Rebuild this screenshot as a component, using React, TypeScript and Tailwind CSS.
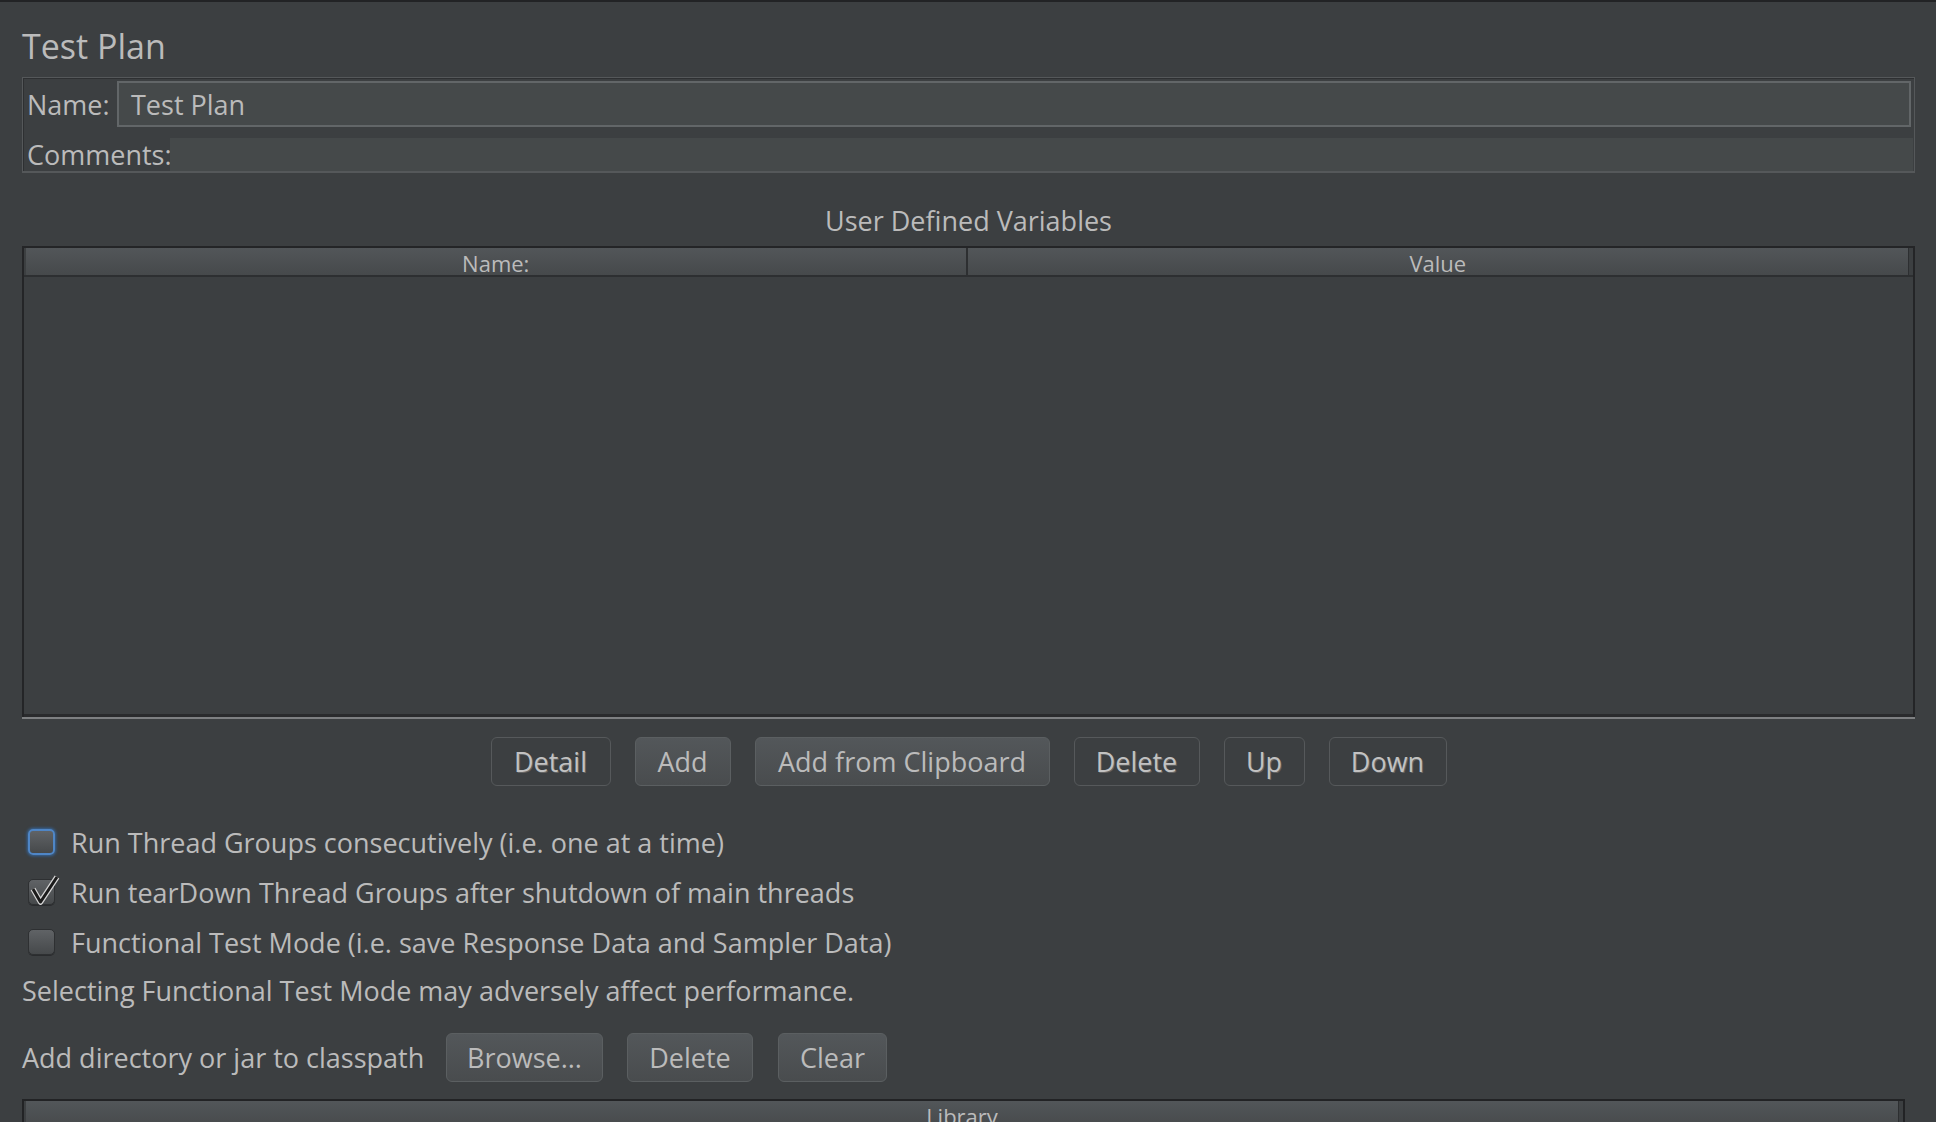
import React from "react";

/**
 * JMeter "Test Plan" editor, Darcula look.
 */

interface BtnProps {
  label: string;
  enabled?: boolean;
  className?: string;
}

function Btn({ label, enabled = false, className = "" }: BtnProps) {
  return (
    <div
      className={`flex h-[49px] shrink-0 items-center justify-center rounded-[6px] border-[1.5px] text-[27px] leading-[27px] ${
        enabled
          ? "border-[#5b5f61] bg-linear-to-b from-[#53575a] to-[#494c4e] text-[#bbbbbb]"
          : "border-[#56595b] bg-[#3c3f41] text-[#c2c2c2] [text-shadow:1px_1px_0_#646464]"
      } ${className}`}
    >
      {label}
    </div>
  );
}

interface CheckRowProps {
  label: string;
  checked?: boolean;
  focused?: boolean;
}

function CheckRow({ label, checked = false, focused = false }: CheckRowProps) {
  return (
    <div className="flex h-[50px] items-center">
      <div
        className={`relative ml-[6px] h-[26px] w-[27px] rounded-[5px] bg-linear-to-b from-[#606366] to-[#46494b] ${
          focused
            ? "border-[2px] border-[#4f86c6] shadow-[0_0_3px_1px_#35679f]"
            : "border border-[#2e3032] shadow-[0_1px_0_#2a2c2e]"
        }`}
      >
        {checked && (
          <svg
            className="absolute left-[-1px] top-[-5px] overflow-visible"
            width="32"
            height="30"
            viewBox="0 0 32 30"
          >
            <path d="M5 14 L12.5 27 L29 2" fill="none" stroke="#d6d6d6" strokeWidth="5.5" strokeLinejoin="round" />
            <path d="M5 14 L12.5 27 L29 2" fill="none" stroke="#1b1b1b" strokeWidth="3" strokeLinejoin="round" />
          </svg>
        )}
      </div>
      <span className="ml-[16px]">{label}</span>
    </div>
  );
}

function TableHeader({ columns }: { columns: string[] }) {
  return (
    <div
      className={`grid h-[27px] bg-linear-to-b from-[#525659] to-[#46494b] text-[22px] leading-[22px] text-[#bbbbbb] ${
        columns.length === 2 ? "grid-cols-2" : "grid-cols-1"
      }`}
    >
      {columns.map((c, i) => (
        <div
          key={c}
          className={`flex items-center justify-center pt-[2px] ${
            i < columns.length - 1 ? "border-r-2 border-[#2d2f31]" : "border-r border-[#2d2f31]"
          }`}
        >
          {c}
        </div>
      ))}
    </div>
  );
}

export default function App() {
  return (
    <div className="h-[1122px] w-[1936px] overflow-hidden border-t-2 border-[#222325] bg-[#3c3f41] pl-[22px] pr-[21px] font-['Open_Sans',sans-serif] text-[27px] leading-[27px] text-[#bbbbbb]">
      {/* title */}
      <div className="mt-[27px] h-[34px] text-[34px] leading-[34px]">Test Plan</div>

      {/* name / comments */}
      <div className="mt-[14px] border border-b-2 border-[#55585a] pl-[4px] shadow-[inset_1px_1px_0_#2e3032]">
        <div className="flex items-center pt-[3px]">
          <span className="w-[90px] shrink-0">Name:</span>
          <div className="mr-[3px] flex h-[46px] flex-1 items-center border-2 border-[#626668] bg-[#45494a] pl-[12px]">
            Test Plan
          </div>
        </div>
        <div className="mt-[11px] flex items-center">
          <span className="w-[143px] shrink-0">Comments:</span>
          <div className="mr-[1px] h-[33px] flex-1 bg-[#45494a]" />
        </div>
      </div>

      {/* user defined variables */}
      <div className="h-[73px] pt-[34px] text-center">User Defined Variables</div>
      <div className="border-x-2 border-t-2 border-[#242527]">
        <div className="pl-[2px] pr-[4px]">
          <TableHeader columns={["Name:", "Value"]} />
        </div>
        <div className="h-[439px] border-t-2 border-[#2d2f31]" />
        <div className="h-[3px] bg-[#2a2b2d]" />
      </div>
      <div className="h-[2px] bg-[#7e8082]" />

      <div className="mt-[18px] flex justify-center gap-[24px]">
        <Btn label="Detail" className="w-[120px]" />
        <Btn label="Add" enabled className="w-[96px]" />
        <Btn label="Add from Clipboard" enabled className="w-[295px]" />
        <Btn label="Delete" className="w-[126px]" />
        <Btn label="Up" className="w-[81px]" />
        <Btn label="Down" className="w-[118px]" />
      </div>

      {/* options */}
      <div className="mt-[31px]">
        <CheckRow label="Run Thread Groups consecutively (i.e. one at a time)" focused />
        <CheckRow label="Run tearDown Thread Groups after shutdown of main threads" checked />
        <CheckRow label="Functional Test Mode (i.e. save Response Data and Sampler Data)" />
      </div>
      <div className="flex h-[46px] items-center">
        Selecting Functional Test Mode may adversely affect performance.
      </div>

      {/* classpath */}
      <div className="mt-[20px] flex items-center">
        <span className="w-[405px] shrink-0">Add directory or jar to classpath</span>
        <Btn label="Browse..." enabled className="ml-[19px] w-[157px]" />
        <Btn label="Delete" enabled className="ml-[24px] w-[126px]" />
        <Btn label="Clear" enabled className="ml-[25px] w-[109px]" />
      </div>
      <div className="mr-[10px] mt-[17px] border-x-2 border-t-2 border-[#222325]">
        <div className="pl-[2px] pr-[4px]">
          <TableHeader columns={["Library"]} />
        </div>
        <div className="h-[200px]" />
      </div>
    </div>
  );
}
